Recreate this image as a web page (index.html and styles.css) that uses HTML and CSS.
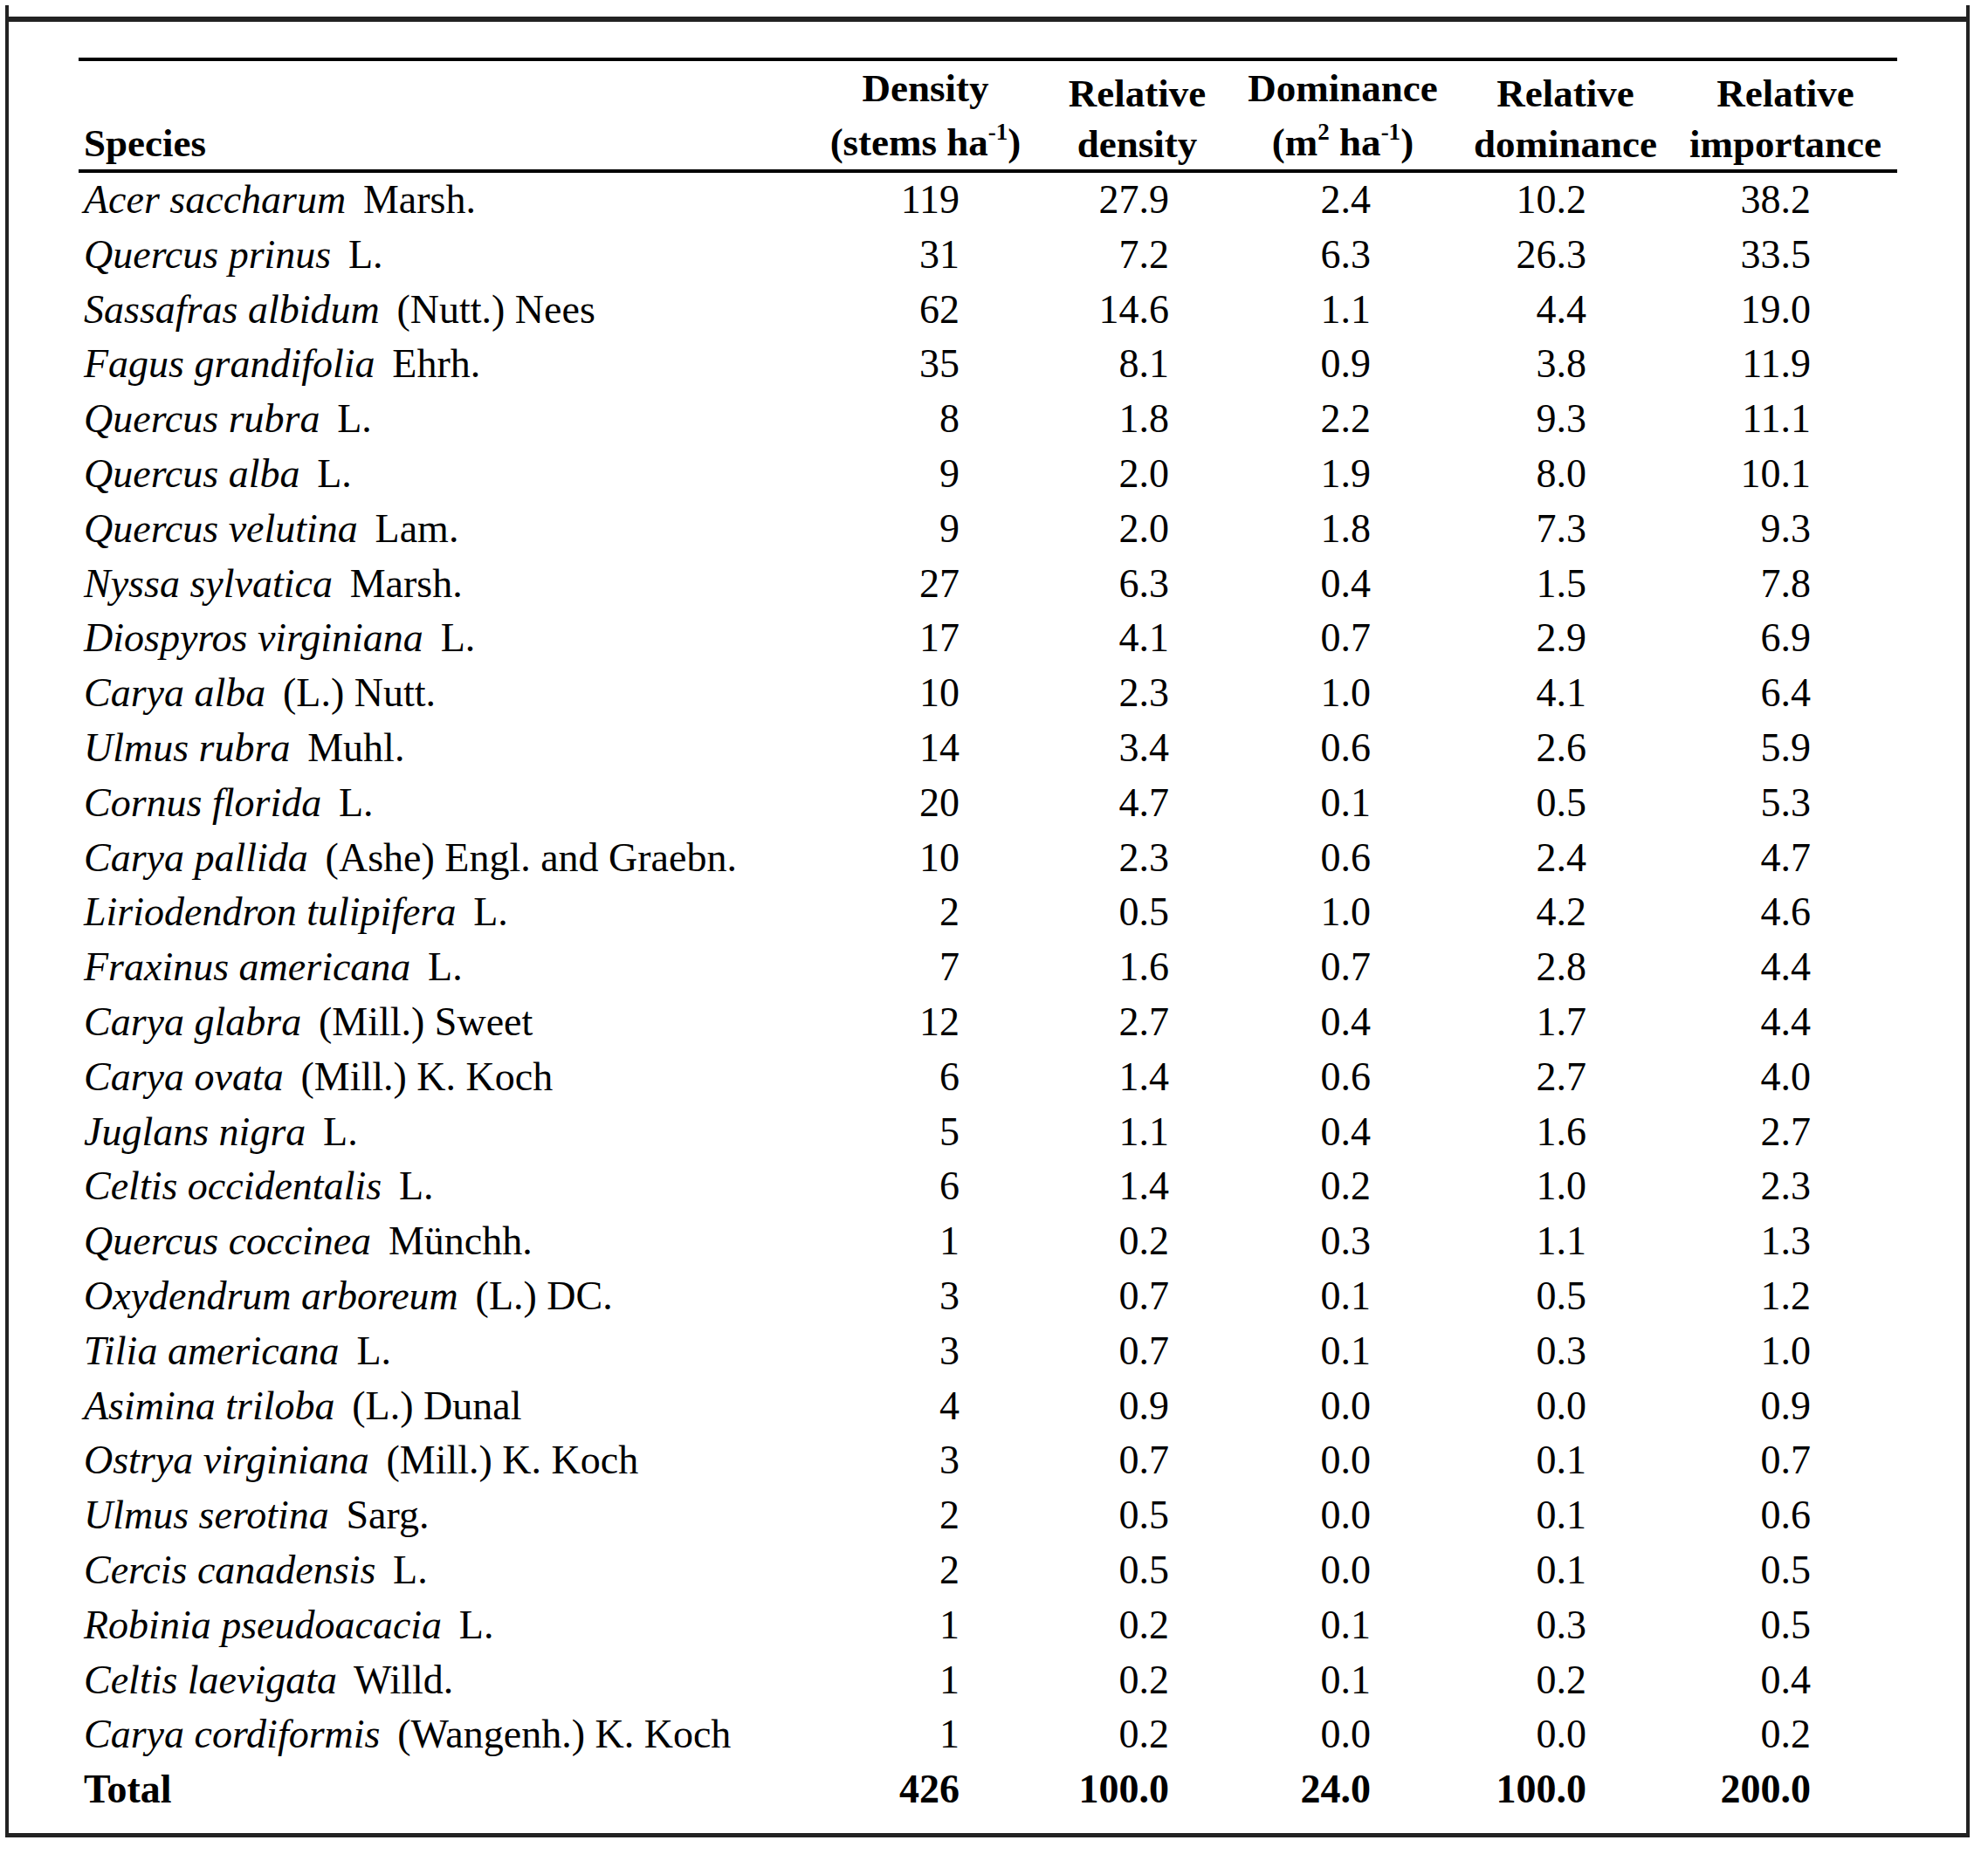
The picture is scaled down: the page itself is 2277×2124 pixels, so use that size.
FILE: index.html
```html
<!DOCTYPE html>
<html lang="en">
<head>
<meta charset="utf-8">
<title>Species importance</title>
<link rel="stylesheet" href="styles.css">
</head>
<body>
<div class="frame">
  <div class="frame-inner">
    <table class="data">
      <colgroup>
        <col class="w-species"><col class="w-dens"><col class="w-rdens"><col class="w-dom"><col class="w-rdom"><col class="w-rimp">
      </colgroup>
      <thead>
        <tr>
          <th class="h-species">Species</th>
          <th class="h-unit">Density<br>(stems ha<sup>-1</sup>)</th>
          <th>Relative<br>density</th>
          <th class="h-unit">Dominance<br>(m<sup>2</sup> ha<sup>-1</sup>)</th>
          <th class="h-rdom">Relative<br>dominance</th>
          <th>Relative<br>importance</th>
        </tr>
      </thead>
      <tbody>
        <tr><td class="sp"><i>Acer saccharum</i> Marsh.</td><td class="n1">119</td><td class="n2">27.9</td><td class="n3">2.4</td><td class="n4">10.2</td><td class="n5">38.2</td></tr>
        <tr><td class="sp"><i>Quercus prinus</i> L.</td><td class="n1">31</td><td class="n2">7.2</td><td class="n3">6.3</td><td class="n4">26.3</td><td class="n5">33.5</td></tr>
        <tr><td class="sp"><i>Sassafras albidum</i> (Nutt.) Nees</td><td class="n1">62</td><td class="n2">14.6</td><td class="n3">1.1</td><td class="n4">4.4</td><td class="n5">19.0</td></tr>
        <tr><td class="sp"><i>Fagus grandifolia</i> Ehrh.</td><td class="n1">35</td><td class="n2">8.1</td><td class="n3">0.9</td><td class="n4">3.8</td><td class="n5">11.9</td></tr>
        <tr><td class="sp"><i>Quercus rubra</i> L.</td><td class="n1">8</td><td class="n2">1.8</td><td class="n3">2.2</td><td class="n4">9.3</td><td class="n5">11.1</td></tr>
        <tr><td class="sp"><i>Quercus alba</i> L.</td><td class="n1">9</td><td class="n2">2.0</td><td class="n3">1.9</td><td class="n4">8.0</td><td class="n5">10.1</td></tr>
        <tr><td class="sp"><i>Quercus velutina</i> Lam.</td><td class="n1">9</td><td class="n2">2.0</td><td class="n3">1.8</td><td class="n4">7.3</td><td class="n5">9.3</td></tr>
        <tr><td class="sp"><i>Nyssa sylvatica</i> Marsh.</td><td class="n1">27</td><td class="n2">6.3</td><td class="n3">0.4</td><td class="n4">1.5</td><td class="n5">7.8</td></tr>
        <tr><td class="sp"><i>Diospyros virginiana</i> L.</td><td class="n1">17</td><td class="n2">4.1</td><td class="n3">0.7</td><td class="n4">2.9</td><td class="n5">6.9</td></tr>
        <tr><td class="sp"><i>Carya alba</i> (L.) Nutt.</td><td class="n1">10</td><td class="n2">2.3</td><td class="n3">1.0</td><td class="n4">4.1</td><td class="n5">6.4</td></tr>
        <tr><td class="sp"><i>Ulmus rubra</i> Muhl.</td><td class="n1">14</td><td class="n2">3.4</td><td class="n3">0.6</td><td class="n4">2.6</td><td class="n5">5.9</td></tr>
        <tr><td class="sp"><i>Cornus florida</i> L.</td><td class="n1">20</td><td class="n2">4.7</td><td class="n3">0.1</td><td class="n4">0.5</td><td class="n5">5.3</td></tr>
        <tr><td class="sp"><i>Carya pallida</i> (Ashe) Engl. and Graebn.</td><td class="n1">10</td><td class="n2">2.3</td><td class="n3">0.6</td><td class="n4">2.4</td><td class="n5">4.7</td></tr>
        <tr><td class="sp"><i>Liriodendron tulipifera</i> L.</td><td class="n1">2</td><td class="n2">0.5</td><td class="n3">1.0</td><td class="n4">4.2</td><td class="n5">4.6</td></tr>
        <tr><td class="sp"><i>Fraxinus americana</i> L.</td><td class="n1">7</td><td class="n2">1.6</td><td class="n3">0.7</td><td class="n4">2.8</td><td class="n5">4.4</td></tr>
        <tr><td class="sp"><i>Carya glabra</i> (Mill.) Sweet</td><td class="n1">12</td><td class="n2">2.7</td><td class="n3">0.4</td><td class="n4">1.7</td><td class="n5">4.4</td></tr>
        <tr><td class="sp"><i>Carya ovata</i> (Mill.) K. Koch</td><td class="n1">6</td><td class="n2">1.4</td><td class="n3">0.6</td><td class="n4">2.7</td><td class="n5">4.0</td></tr>
        <tr><td class="sp"><i>Juglans nigra</i> L.</td><td class="n1">5</td><td class="n2">1.1</td><td class="n3">0.4</td><td class="n4">1.6</td><td class="n5">2.7</td></tr>
        <tr><td class="sp"><i>Celtis occidentalis</i> L.</td><td class="n1">6</td><td class="n2">1.4</td><td class="n3">0.2</td><td class="n4">1.0</td><td class="n5">2.3</td></tr>
        <tr><td class="sp"><i>Quercus coccinea</i> Münchh.</td><td class="n1">1</td><td class="n2">0.2</td><td class="n3">0.3</td><td class="n4">1.1</td><td class="n5">1.3</td></tr>
        <tr><td class="sp"><i>Oxydendrum arboreum</i> (L.) DC.</td><td class="n1">3</td><td class="n2">0.7</td><td class="n3">0.1</td><td class="n4">0.5</td><td class="n5">1.2</td></tr>
        <tr><td class="sp"><i>Tilia americana</i> L.</td><td class="n1">3</td><td class="n2">0.7</td><td class="n3">0.1</td><td class="n4">0.3</td><td class="n5">1.0</td></tr>
        <tr><td class="sp"><i>Asimina triloba</i> (L.) Dunal</td><td class="n1">4</td><td class="n2">0.9</td><td class="n3">0.0</td><td class="n4">0.0</td><td class="n5">0.9</td></tr>
        <tr><td class="sp"><i>Ostrya virginiana</i> (Mill.) K. Koch</td><td class="n1">3</td><td class="n2">0.7</td><td class="n3">0.0</td><td class="n4">0.1</td><td class="n5">0.7</td></tr>
        <tr><td class="sp"><i>Ulmus serotina</i> Sarg.</td><td class="n1">2</td><td class="n2">0.5</td><td class="n3">0.0</td><td class="n4">0.1</td><td class="n5">0.6</td></tr>
        <tr><td class="sp"><i>Cercis canadensis</i> L.</td><td class="n1">2</td><td class="n2">0.5</td><td class="n3">0.0</td><td class="n4">0.1</td><td class="n5">0.5</td></tr>
        <tr><td class="sp"><i>Robinia pseudoacacia</i> L.</td><td class="n1">1</td><td class="n2">0.2</td><td class="n3">0.1</td><td class="n4">0.3</td><td class="n5">0.5</td></tr>
        <tr><td class="sp"><i>Celtis laevigata</i> Willd.</td><td class="n1">1</td><td class="n2">0.2</td><td class="n3">0.1</td><td class="n4">0.2</td><td class="n5">0.4</td></tr>
        <tr><td class="sp"><i>Carya cordiformis</i> (Wangenh.) K. Koch</td><td class="n1">1</td><td class="n2">0.2</td><td class="n3">0.0</td><td class="n4">0.0</td><td class="n5">0.2</td></tr>
        <tr class="total"><td class="sp">Total</td><td class="n1">426</td><td class="n2">100.0</td><td class="n3">24.0</td><td class="n4">100.0</td><td class="n5">200.0</td></tr>
      </tbody>
    </table>
  </div>
</div>
</body>
</html>
```
FILE: styles.css
```css
html, body {
  margin: 0;
  padding: 0;
  background: #ffffff;
}

body {
  font-family: "Liberation Serif", "Times New Roman", serif;
  color: #000000;
}

.frame {
  margin: 6px 0 0 6px;
  width: 2242px;
  padding-top: 13px;
  border-left: 4px solid #222222;
  border-right: 4px solid #222222;
  border-bottom: 5px solid #222222;
}

.frame-inner {
  border-top: 6px solid #222222;
  padding: 41px 0 18px 80px;
}

.data {
  border-collapse: separate;
  border-spacing: 0;
  table-layout: fixed;
  width: 2083px;
  border-top: 4px solid #000000;
  font-size: 46px;
}

.w-species { width: 850px; }
.w-dens { width: 240px; }
.w-rdens { width: 245px; }
.w-dom { width: 226px; }
.w-rdom { width: 266px; }
.w-rimp { width: 256px; }

.data th {
  font-weight: bold;
  font-size: 45px;
  line-height: 58px;
  text-align: center;
  vertical-align: bottom;
  padding: 0;
  border-bottom: 4px solid #000000;
  white-space: nowrap;
}

.data th.h-unit {
  line-height: 62px;
}

.data th.h-species {
  text-align: left;
  padding-left: 6px;
  line-height: 60px;
}

.data th.h-rdom {
  padding-left: 18px;
}

.data sup {
  font-size: 0.6em;
  line-height: 0;
  vertical-align: 0.65em;
}

.data td {
  padding: 0;
  line-height: 62.8px;
  white-space: nowrap;
  text-align: right;
}

.data td.sp {
  text-align: left;
  padding-left: 6px;
}

.data td.sp i {
  margin-right: 0.18em;
}

.data td.n1 { padding-right: 81px; }
.data td.n2 { padding-right: 86px; }
.data td.n3 { padding-right: 81px; }
.data td.n4 { padding-right: 100px; }
.data td.n5 { padding-right: 99px; }

.data tr.total td {
  font-weight: bold;
}
```
